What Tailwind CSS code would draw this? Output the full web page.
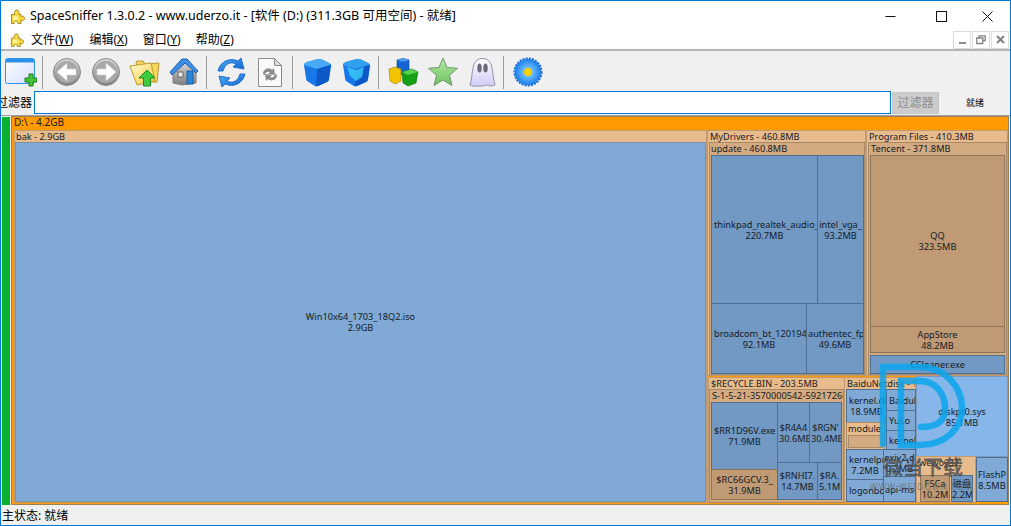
<!DOCTYPE html>
<html><head><meta charset="utf-8"><script src="https://cdn.jsdelivr.net/npm/@tailwindcss/browser@4"></script></head>
<body class="m-0 overflow-hidden bg-[#f0f0f0]">
<div class="relative flex flex-col w-[1011px] h-[526px] overflow-hidden border border-[#0078d7] font-['Noto_Sans','Noto_Sans_CJK_SC',sans-serif] text-black box-border">
  <!-- title -->
  <div class="flex items-center h-[29px] shrink-0 bg-white pl-[9px] pt-[2px] text-[12.5px]">
    <svg width="15" height="15" viewBox="0 0 15 15"><path d="M1.500 5.500H4.500C4 3 5 1 6.800 1S9.500 3 9 5.500H11V7.500c2-1 3.500 0 3.500 1.800S13 12 11 11.200V14.500H7.800C8 13 7 12 6 12s-2 1-1.800 2.500H1.500z" fill="#f6d83e" stroke="#a88a2a"/><path d="M3 7h5v4H3z" fill="#fff3a0"/></svg>
    <span class="ml-[5px]">SpaceSniffer 1.3.0.2 - www.uderzo.it - [软件 (D:) (311.3GB 可用空间) - 就绪]</span>
    <div class="ml-auto flex items-center">
      <svg class="mr-[40px]" width="11" height="11" viewBox="0 0 11 11"><path d="M0.500 5.500h10" stroke="#111"/></svg>
      <svg class="mr-[35px]" width="11" height="11" viewBox="0 0 11 11"><rect x="0.500" y="0.500" width="10" height="10" fill="none" stroke="#111"/></svg>
      <svg class="mr-[17px]" width="11" height="11" viewBox="0 0 11 11"><path d="M0.500 0.500l10 10M10.500 0.500l-10 10" stroke="#111"/></svg>
    </div>
  </div>
  <!-- menu -->
  <div class="flex items-center h-[21px] shrink-0 bg-white pl-[9px] text-[12px] border-b-2 border-[#b4b4b4]">
    <svg width="14" height="14" viewBox="0 0 15 15"><path d="M1.500 5.500H4.500C4 3 5 1 6.800 1S9.500 3 9 5.500H11V7.500c2-1 3.500 0 3.500 1.800S13 12 11 11.200V14.500H7.800C8 13 7 12 6 12s-2 1-1.800 2.500H1.500z" fill="#f6d83e" stroke="#a88a2a"/><path d="M3 7h5v4H3z" fill="#fff3a0"/></svg>
    <span class="ml-[7px] pt-[1px]">文件(<u>W</u>)</span><span class="ml-[16px] pt-[1px]">编辑(<u>X</u>)</span><span class="ml-[15px] pt-[1px]">窗口(<u>Y</u>)</span><span class="ml-[15px] pt-[1px]">帮助(<u>Z</u>)</span>
    <div class="ml-auto flex gap-[1px] mr-[1px]">
      <div class="w-[18px] h-[18px] border border-[#dcdcdc] flex items-end justify-center pb-[4px]"><div class="w-[7px] h-[2px] bg-[#8a8a8a]"></div></div>
      <div class="w-[18px] h-[18px] border border-[#dcdcdc] flex items-center justify-center"><svg width="10" height="10" viewBox="0 0 10 10"><path d="M3 2.500V.8h6.200v4.700H7M.8 3h6v5.500h-6z" fill="none" stroke="#808080" stroke-width="1.300"/></svg></div>
      <div class="w-[18px] h-[18px] border border-[#dcdcdc] flex items-center justify-center"><svg width="9" height="9" viewBox="0 0 9 9"><path d="M1 1l7 7M8 1l-7 7" stroke="#808080" stroke-width="2"/></svg></div>
    </div>
  </div>
  <!-- toolbar -->
  <div class="flex items-center h-[39px] shrink-0 bg-[#f0f0f0] pl-[4px] pt-[3px]">
    <svg width="32" height="30" viewBox="0 0 32 30"><defs>
      <linearGradient id="w" x1="0" y1="0" x2="1" y2="1"><stop offset="0" stop-color="#fff"/><stop offset="1" stop-color="#d4dcff"/></linearGradient>
      <linearGradient id="gb" x1="0" y1="0" x2="0" y2="1"><stop offset="0" stop-color="#d8d8d8"/><stop offset="1" stop-color="#7e7e7e"/></linearGradient>
      <linearGradient id="bl" x1="0" y1="0" x2="1" y2="1"><stop offset="0" stop-color="#4cb0f6"/><stop offset="1" stop-color="#1060d0"/></linearGradient>
      <linearGradient id="fo" x1="0" y1="0" x2="1" y2="1"><stop offset="0" stop-color="#fffbd0"/><stop offset="1" stop-color="#f4c83c"/></linearGradient>
      <linearGradient id="gr" x1="0" y1="0" x2="0" y2="1"><stop offset="0" stop-color="#b4eca8"/><stop offset="1" stop-color="#6cc060"/></linearGradient>
      <radialGradient id="fl"><stop offset="0.2" stop-color="#7cc8fa"/><stop offset="1" stop-color="#1c80ee"/></radialGradient>
      <linearGradient id="gh" x1="0" y1="0" x2="0" y2="1"><stop offset="0" stop-color="#ffffff"/><stop offset="1" stop-color="#d0ccf6"/></linearGradient>
    </defs><rect x="0.500" y="1.500" width="29" height="25" rx="2" fill="url(#w)" stroke="#2d94ec"/><rect x="1" y="2" width="28" height="3.500" fill="#2a90ea"/><path d="M20 21h4v-4h4v4h4v4h-4v4h-4v-4h-4z" fill="#44c434" stroke="#1a7d1a"/></svg>
    <div class="w-px h-[33px] bg-[#9a9a9a] ml-[5px] mr-[10px]"></div>
    <svg width="28" height="28" viewBox="0 0 28 28"><circle cx="14" cy="14" r="13.500" fill="url(#gb)" stroke="#8a8a8a"/><circle cx="14" cy="14" r="11" fill="#a8a8a8"/><path d="M23 11v6h-9v6L4 14l10-9v6z" fill="#fff" stroke="#d0d0d0" stroke-width=".6"/></svg>
    <svg class="ml-[11px]" width="28" height="28" viewBox="0 0 28 28"><circle cx="14" cy="14" r="13.500" fill="url(#gb)" stroke="#8a8a8a"/><circle cx="14" cy="14" r="11" fill="#a8a8a8"/><path d="M5 11v6h9v6l10-9-10-9v6z" fill="#fff" stroke="#d0d0d0" stroke-width=".6"/></svg>
    <svg class="ml-[9px]" width="32" height="30" viewBox="0 0 32 30"><path d="M7 5l1-1h6l2 3 14-1-2 19H11z" fill="#f4d860" stroke="#b89430"/><path d="M1 9l21-3 4 18-18 4z" fill="url(#fo)" stroke="#c09c30"/><path d="M18 13l8 8h-4.500v8h-7v-8H10z" fill="#40cc40" stroke="#1c8a1c"/></svg>
    <svg class="ml-[7px]" width="32" height="28" viewBox="0 0 32 28"><path d="M5 13v12l9 2 14-2V12L16 4z" fill="url(#gb)" stroke="#808080"/><path d="M2 14L14 1h5l11 12-2 2L17 5 4 17z" fill="#3c90e8" stroke="#1c5ea8"/><rect x="10" y="14" width="5" height="5" fill="#ececec" stroke="#666"/><rect x="19" y="13" width="6" height="13" fill="#2a86d8" stroke="#1c5ea8"/></svg>
    <div class="w-px h-[33px] bg-[#9a9a9a] ml-[6px] mr-[9px]"></div>
    <svg width="31" height="31" viewBox="0 0 31 31"><path d="M2 14C4 5 13 0 22 4l3-3 3 11-11-2 3-3c-6-3-11 0-13 7z" fill="url(#bl)" stroke="#2070c8"/><path d="M29 17c-2 9-11 14-20 10l-3 3-3-11 11 2-3 3c6 3 11 0 13-7z" fill="url(#bl)" stroke="#2070c8"/></svg>
    <svg class="ml-[10px]" width="26" height="31" viewBox="0 0 26 31"><path d="M1.500 1.500h16l7 7v21h-23z" fill="#fafafa" stroke="#8c8c8c"/><path d="M17.500 1.500v7h7z" fill="#ddd" stroke="#8c8c8c"/><path d="M6 17c0-5 6-7 9-4l2-2 1 7-7-1 2-2c-2-1-5 0-5 3zM20 18c0 5-6 7-9 4l-2 2-1-7 7 1-2 2c2 1 5 0 5-3z" fill="#8a8a8a"/></svg>
    <div class="w-px h-[33px] bg-[#9a9a9a] ml-[9px] mr-[10px]"></div>
    <svg width="29" height="29" viewBox="0 0 29 29"><path d="M1 7Q1 5 4 4L15 1Q17 1 19 1.500L26 5Q29 6 28 9L26 21Q26 23 24 24L15 28Q13 29 11 27.500L4 23Q3 22 3 20Z" fill="#1878e8"/><path d="M1 7Q1 5 4 4L15 1Q17 1 19 1.500L26 5Q28 6 27 7L14 11Z" fill="#48aaf6"/><path d="M14 11L27.500 7 26 21Q26 23 24 24L15 28 13 28Z" fill="#0e58c8"/></svg>
    <svg class="ml-[10px]" width="29" height="29" viewBox="0 0 29 29"><path d="M1 7Q1 5 4 4L15 1Q17 1 19 1.500L26 5Q29 6 28 9L26 21Q26 23 24 24L15 28Q13 29 11 27.500L4 23Q3 22 3 20Z" fill="#1878e8"/><path d="M1 7Q1 5 4 4L15 1Q17 1 19 1.500L26 5Q28 6 27 7L14 11Z" fill="#30a0f0"/><path d="M14 11L27.500 7 26 21Q26 23 24 24L15 28 13 28Z" fill="#0e58c8"/><path d="M5 9L14 12 22 9 20 19 14 23 8 18Z" fill="#38c8f8" opacity=".85"/></svg>
    <div class="w-px h-[33px] bg-[#9a9a9a] ml-[7px] mr-[9px]"></div>
    <svg width="31" height="30" viewBox="0 0 31 30"><path d="M9 3Q15 0 21 3V16Q15 19 9 16Z" fill="#1464d8" stroke="#0c3c90" stroke-width=".6"/><path d="M9 3Q15 6 21 3 15 0 9 3Z" fill="#4ca0f0"/><path d="M1 12L7 10 13 12V24L7 27 2 24Z" fill="#f4c400" stroke="#a08000" stroke-width=".6"/><path d="M14 15L24 12 30 15 28 26 20 29 15 26Z" fill="#16a016" stroke="#0c6c0c" stroke-width=".6"/><path d="M14 15L24 12 30 15 20 18Z" fill="#58d050"/></svg>
    <svg class="ml-[9px]" width="30" height="30" viewBox="0 0 30 30"><path d="M15 1l4 9.500 10.500.8-8 7 2.500 10.200-9-5.500-9 5.500 2.500-10.200-8-7L11 10.500z" fill="url(#gr)" stroke="#6e9a6a" stroke-linejoin="round"/></svg>
    <svg class="ml-[11px]" width="27" height="30" viewBox="0 0 27 30"><path d="M1 28C3 22 3 14 4.500 9c2-10 16-10 18 0 1.500 5 1.500 13 3.500 19-4 2-7 0-8 0s-3 1-5 1-8 1-12-1z" fill="url(#gh)" stroke="#9090ac"/><ellipse cx="10.500" cy="11" rx="2.200" ry="4.500" fill="#6a6a78"/><ellipse cx="16.500" cy="11" rx="2.200" ry="4.500" fill="#6a6a78"/></svg>
    <div class="w-px h-[33px] bg-[#9a9a9a] ml-[7px] mr-[9px]"></div>
    <svg width="30" height="30" viewBox="0 0 30 30"><circle cx="15" cy="15" r="13" fill="url(#fl)"/><circle cx="15" cy="15" r="13.500" fill="none" stroke="#1a70d8" stroke-width="2" stroke-dasharray="2.200 1"/><circle cx="15" cy="15" r="4" fill="#f8d000"/></svg>
  </div>
  <!-- filter -->
  <div class="flex items-center h-[25px] shrink-0 bg-[#f0f0f0] text-[12px] -ml-[5px]">
    <span class="w-[38px] shrink-0">过滤器</span>
    <div class="w-[857px] h-[23px] bg-white border border-[#0078d7]"></div>
    <div class="ml-[1px] w-[47px] h-[22px] bg-[#cccccc] border border-[#c4c4c4] text-[#8c8c8c] flex items-center justify-center">过滤器</div>
    <span class="ml-[27px] text-[9px]">就绪</span>
  </div>
  <!-- treemap canvas -->
  <div class="relative flex-1 bg-[#f0f0f0] border-t border-[#a0a0a0] text-[9.2px] leading-[11px] text-[#141c26]">
    <div class="absolute left-[1px] top-[1px] w-[8px] h-[388px] bg-[#0cb030]"></div>
    <div class="absolute left-[10px] top-[0px] w-[998px] h-[389px] bg-[#ff9a00] border border-[#a08050] pl-[2px] text-[10px] whitespace-nowrap">D:\ - 4.2GB</div>

    <div class="absolute left-[13px] top-[14px] w-[693px] h-[373px] bg-[#e8bb8c] border border-[#c09a70] overflow-hidden pl-[1px] whitespace-nowrap">bak - 2.9GB</div>
    <div class="absolute left-[14px] top-[26px] w-[691px] h-[360px] bg-[#80a9d5] border border-[#7a8fa8] flex items-center justify-center text-center">Win10x64_1703_18Q2.iso<br>2.9GB</div>

    <div class="absolute left-[706px] top-[14px] w-[159px] h-[246px] bg-[#e8bb8c] border border-[#c09a70] pl-[2px] whitespace-nowrap">MyDrivers - 460.8MB</div>
    <div class="absolute left-[708px] top-[26px] w-[156px] h-[233px] bg-[#d4aa80] border border-[#a88a68] pl-[1px] whitespace-nowrap">update - 460.8MB</div>
    <div class="absolute left-[710px] top-[39px] w-[107px] h-[149px] bg-[#7199c4] border border-[#4f6f90] flex flex-col justify-center text-center px-[2px] overflow-hidden whitespace-nowrap"><div>thinkpad_realtek_audio_6</div><div>220.7MB</div></div>
    <div class="absolute left-[816px] top-[39px] w-[47px] h-[149px] bg-[#7199c4] border border-[#4f6f90] flex flex-col justify-center text-center px-[1px] overflow-hidden whitespace-nowrap"><div>intel_vga_</div><div>93.2MB</div></div>
    <div class="absolute left-[710px] top-[187px] w-[96px] h-[71px] bg-[#7199c4] border border-[#4f6f90] flex flex-col justify-center text-center px-[2px] overflow-hidden whitespace-nowrap"><div>broadcom_bt_1201940</div><div>92.1MB</div></div>
    <div class="absolute left-[805px] top-[187px] w-[58px] h-[71px] bg-[#7199c4] border border-[#4f6f90] flex flex-col justify-center text-center px-[1px] overflow-hidden whitespace-nowrap"><div>authentec_fp</div><div>49.6MB</div></div>

    <div class="absolute left-[865px] top-[14px] w-[142px] h-[246px] bg-[#e8bb8c] border border-[#c09a70] pl-[2px] whitespace-nowrap">Program Files - 410.3MB</div>
    <div class="absolute left-[867px] top-[26px] w-[139px] h-[233px] bg-[#d4aa80] border border-[#a88a68] pl-[2px] whitespace-nowrap">Tencent - 371.8MB</div>
    <div class="absolute left-[869px] top-[39px] w-[135px] h-[172px] bg-[#c09a74] border border-[#8f7558] flex flex-col justify-center text-center"><div>QQ</div><div>323.5MB</div></div>
    <div class="absolute left-[869px] top-[210px] w-[135px] h-[27px] bg-[#c09a74] border border-[#8f7558] flex flex-col justify-center text-center"><div>AppStore</div><div>48.2MB</div></div>
    <div class="absolute left-[869px] top-[239px] w-[135px] h-[19px] bg-[#7199c4] border border-[#4f6f90] flex items-center justify-center">CCleaner.exe</div>

    <div class="absolute left-[707px] top-[261px] w-[137px] h-[126px] bg-[#e8bb8c] border border-[#c09a70] pl-[2px] overflow-hidden whitespace-nowrap">$RECYCLE.BIN - 203.5MB</div>
    <div class="absolute left-[708px] top-[273px] w-[135px] h-[114px] bg-[#d4aa80] border border-[#a88a68] pl-[2px] overflow-hidden whitespace-nowrap">S-1-5-21-3570000542-59217260</div>
    <div class="absolute left-[710px] top-[286px] w-[67px] h-[68px] bg-[#7199c4] border border-[#4f6f90] flex flex-col justify-center text-center px-[2px] overflow-hidden whitespace-nowrap"><div>$RR1D96V.exe</div><div>71.9MB</div></div>
    <div class="absolute left-[710px] top-[353px] w-[67px] h-[31px] bg-[#c09a74] border border-[#8f7558] flex flex-col justify-center text-center px-[2px] overflow-hidden whitespace-nowrap"><div>$RC66GCV.3_</div><div>31.9MB</div></div>
    <div class="absolute left-[776px] top-[286px] w-[33px] h-[61px] bg-[#7199c4] border border-[#4f6f90] flex flex-col justify-center text-center px-[1px] overflow-hidden whitespace-nowrap"><div>$R4A4</div><div>30.6MB</div></div>
    <div class="absolute left-[808px] top-[286px] w-[33px] h-[61px] bg-[#7199c4] border border-[#4f6f90] flex flex-col justify-center text-center px-[1px] overflow-hidden whitespace-nowrap"><div>$RGN'</div><div>30.4MB</div></div>
    <div class="absolute left-[776px] top-[346px] w-[41px] h-[38px] bg-[#7199c4] border border-[#4f6f90] flex flex-col justify-center text-center px-[1px] overflow-hidden whitespace-nowrap"><div>$RNHI7.</div><div>14.7MB</div></div>
    <div class="absolute left-[816px] top-[346px] w-[25px] h-[38px] bg-[#7199c4] border border-[#4f6f90] flex flex-col justify-center text-center px-[1px] overflow-hidden whitespace-nowrap"><div>$RA.</div><div>5.1MB</div></div>

    <div class="absolute left-[843px] top-[261px] w-[72px] h-[126px] bg-[#e8bb8c] border border-[#c09a70] pl-[2px] overflow-hidden whitespace-nowrap">BaiduNetdisk - 1</div>
    <div class="absolute left-[845px] top-[273px] w-[41px] h-[34px] bg-[#80a9d5] border border-[#4f6f90] flex flex-col justify-center text-center px-[2px] overflow-hidden whitespace-nowrap"><div>kernel.dll</div><div>18.9MB</div></div>
    <div class="absolute left-[845px] top-[306px] w-[39px] h-[28px] bg-[#e8bb8c] border border-[#a88a68] pl-[1px] overflow-hidden whitespace-nowrap">module<div class="absolute left-[1px] top-[12px] w-[35px] h-[13px] bg-[#d4aa80] border border-[#a88a68]"></div></div>
    <div class="absolute left-[845px] top-[333px] w-[38px] h-[31px] bg-[#80a9d5] border border-[#4f6f90] flex flex-col justify-center text-center px-[2px] overflow-hidden whitespace-nowrap"><div>kernelpr</div><div>7.2MB</div></div>
    <div class="absolute left-[845px] top-[363px] w-[38px] h-[23px] bg-[#80a9d5] border border-[#4f6f90] flex items-center px-[2px] overflow-hidden whitespace-nowrap">logonbd</div>
    <div class="absolute left-[885px] top-[273px] w-[30px] h-[22px] bg-[#80a9d5] border border-[#4f6f90] flex items-center px-[2px] overflow-hidden whitespace-nowrap">Baidul</div>
    <div class="absolute left-[885px] top-[294px] w-[30px] h-[21px] bg-[#80a9d5] border border-[#4f6f90] flex items-center px-[2px] overflow-hidden whitespace-nowrap">YuLo</div>
    <div class="absolute left-[885px] top-[314px] w-[30px] h-[20px] bg-[#80a9d5] border border-[#4f6f90] flex items-center px-[2px] overflow-hidden whitespace-nowrap">kernel</div>
    <div class="absolute left-[882px] top-[333px] w-[33px] h-[28px] bg-[#80a9d5] border border-[#4f6f90] flex flex-col justify-center text-center overflow-hidden whitespace-nowrap"><div>exiv2.d</div><div>0.2MB</div></div>
    <div class="absolute left-[882px] top-[360px] w-[33px] h-[26px] bg-[#80a9d5] border border-[#4f6f90] flex items-center px-[1px] overflow-hidden whitespace-nowrap">api-ms-</div>

    <div class="absolute left-[915px] top-[260px] w-[92px] h-[81px] bg-[#86b6ea] border border-[#7a9ac0] flex flex-col justify-center text-center"><div>diskpt0.sys</div><div>85.1MB</div></div>
    <div class="absolute left-[915px] top-[340px] w-[60px] h-[47px] bg-[#e8bb8c] border border-[#c09a70] pl-[2px] overflow-hidden whitespace-nowrap">wewoy32</div>
    <div class="absolute left-[919px] top-[359px] w-[30px] h-[27px] bg-[#c09a74] border border-[#8f7558] flex flex-col justify-center text-center overflow-hidden whitespace-nowrap"><div>FSCa</div><div>10.2M</div></div>
    <div class="absolute left-[950px] top-[359px] w-[22px] h-[27px] bg-[#7199c4] border border-[#4f6f90] flex flex-col justify-center text-center overflow-hidden whitespace-nowrap"><div>磁盘</div><div>2.2M</div></div>
    <div class="absolute left-[975px] top-[341px] w-[32px] h-[45px] bg-[#80a9d5] border border-[#4f6f90] flex flex-col justify-center text-center overflow-hidden whitespace-nowrap"><div>FlashP</div><div>8.5MB</div></div>

    <!-- watermark -->
    <svg class="absolute left-[877px] top-[244px]" width="92" height="92" viewBox="878 360 92 92"><path d="M883 444V367H920C945 367 962 387 962 408S945 445 920 445H901V381H920C935 381 945 393 945 408S935 427 921 427" fill="none" stroke="#0aa4ec" stroke-opacity=".85" stroke-width="6.500" stroke-linecap="round"/></svg>
    <div class="absolute left-[882px] top-[339px] text-[20px] leading-[26px] font-bold text-[#4a4a4a]/80 whitespace-nowrap">微当下载</div>
    <div class="absolute left-[869px] top-[366px] text-[8px] leading-[10px] text-[#666]/70 tracking-[1.300px] whitespace-nowrap">WWW.WEIDOWN.COM</div>
  </div>
  <!-- status -->
  <div class="flex items-center h-[20px] shrink-0 bg-[#f0f0f0] pl-[1px] pt-[1px] text-[12px]">主状态: 就绪</div>
</div>
</body></html>
